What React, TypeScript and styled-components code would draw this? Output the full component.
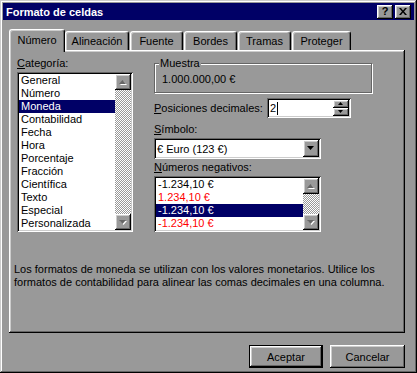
import styled, { createGlobalStyle } from "styled-components";

const FACE = "#999999";
const LIGHT = "#cccccc";
const SHADOW = "#666666";
const NAVY = "#000066";

const raised = `box-shadow: inset -1px -1px #000, inset 1px 1px #fff, inset -2px -2px ${SHADOW}, inset 2px 2px ${LIGHT};`;
const sunken = `box-shadow: inset 1px 1px ${SHADOW}, inset -1px -1px #fff, inset 2px 2px #000, inset -2px -2px ${LIGHT};`;

const GlobalStyle = createGlobalStyle`
  html, body { margin: 0; padding: 0; background: ${FACE}; }
  body { font-family: "Liberation Sans", Arial, sans-serif; font-size: 11px; color: #000; }
  * { box-sizing: border-box; }
`;

const categories = [
  "General", "Número", "Moneda", "Contabilidad", "Fecha", "Hora",
  "Porcentaje", "Fracción", "Científica", "Texto", "Especial", "Personalizada",
];

const negatives = [
  { text: "-1.234,10 €", red: false },
  { text: "1.234,10 €", red: true },
  { text: "-1.234,10 €", red: false },
  { text: "-1.234,10 €", red: true },
];

const tabs = [
  { label: "Número", width: 56 },
  { label: "Alineación", width: 64 },
  { label: "Fuente", width: 53 },
  { label: "Bordes", width: 53 },
  { label: "Tramas", width: 53 },
  { label: "Proteger", width: 59 },
];

interface ArrowProps {
  up?: boolean;
  disabled?: boolean;
  small?: boolean;
}

const Arrow: React.FC<ArrowProps> = ({ up, disabled, small }) => {
  const w = small ? 5 : 7;
  const h = small ? 3 : 4;
  const pts = up ? `0,${h} ${w},${h} ${w / 2},0` : `0,0 ${w},0 ${w / 2},${h}`;
  return (
    <svg width={w + 1} height={h + 1} viewBox={`0 0 ${w + 1} ${h + 1}`}>
      {disabled && <polygon points={pts} fill="#fff" transform="translate(1 1)" />}
      <polygon points={pts} fill={disabled ? SHADOW : "#000"} />
    </svg>
  );
};

const ScrollBarBox: React.FC = () => (
  <ScrollBar>
    <ScrollButton><Arrow up disabled /></ScrollButton>
    <ScrollButton><Arrow disabled /></ScrollButton>
  </ScrollBar>
);

const App = () => {
  return (
    <>
      <GlobalStyle />
      <Window>
        <TitleBar>
          <TitleText>Formato de celdas</TitleText>
          <TitleButtons>
            <TitleButton>?</TitleButton>
            <TitleButton>
              <svg width="8" height="7" viewBox="0 0 8 7">
                <path d="M0 0h2l2 2.5L6 0h2L5 3.5 8 7H6L4 4.5 2 7H0l3-3.5z" fill="#000" />
              </svg>
            </TitleButton>
          </TitleButtons>
        </TitleBar>
        <Body>
          <TabRow>
            {tabs.map((t, i) => (
              <Tab key={t.label} $active={i === 0} $width={t.width}>{t.label}</Tab>
            ))}
          </TabRow>
          <Panel>
            <Columns>
              <LeftColumn>
                <Label><u>C</u>ategoría:</Label>
                <ListBox $height={160}>
                  <ListItems>
                    {categories.map(c => (
                      <ListItem key={c} $selected={c === "Moneda"}>{c}</ListItem>
                    ))}
                  </ListItems>
                  <ScrollBarBox />
                </ListBox>
              </LeftColumn>
              <RightColumn>
                <Group>
                  <GroupLabel>Muestra</GroupLabel>
                  <GroupValue>1.000.000,00 €</GroupValue>
                </Group>
                <FieldRow>
                  <RowLabel><u>P</u>osiciones decimales:</RowLabel>
                  <SpinBox>
                    <SpinText>2<Caret /></SpinText>
                    <SpinButtons>
                      <SpinButton><Arrow up small /></SpinButton>
                      <SpinButton><Arrow small /></SpinButton>
                    </SpinButtons>
                  </SpinBox>
                </FieldRow>
                <Label $top={5}><u>S</u>ímbolo:</Label>
                <Combo>
                  <ComboText>€ Euro (123 €)</ComboText>
                  <ComboButton><Arrow /></ComboButton>
                </Combo>
                <Label $top={2}><u>N</u>úmeros negativos:</Label>
                <ListBox $height={56}>
                  <ListItems>
                    {negatives.map((n, i) => (
                      <ListItem key={i} $selected={i === 2} $red={n.red}>{n.text}</ListItem>
                    ))}
                  </ListItems>
                  <ScrollBarBox />
                </ListBox>
              </RightColumn>
            </Columns>
            <Description>
              Los formatos de moneda se utilizan con los valores monetarios. Utilice los
              <br />
              formatos de contabilidad para alinear las comas decimales en una columna.
            </Description>
          </Panel>
          <ButtonRow>
            <DialogButton $default $width={74}>Aceptar</DialogButton>
            <DialogButton $width={75}>Cancelar</DialogButton>
          </ButtonRow>
        </Body>
      </Window>
    </>
  );
};

const Window = styled.div`
  width: 417px;
  height: 373px;
  padding: 3px;
  background: ${FACE};
  display: flex;
  flex-direction: column;
  box-shadow: inset -1px -1px #000, inset 1px 1px ${LIGHT}, inset -2px -2px ${SHADOW}, inset 2px 2px #fff;
`;

const TitleBar = styled.div`
  height: 17px;
  background: ${NAVY};
  display: flex;
  align-items: center;
  justify-content: space-between;
  padding: 0 3px 0 3px;
`;

const TitleText = styled.span`
  color: #fff;
  font-weight: bold;
  font-size: 11px;
`;

const TitleButtons = styled.div`
  display: flex;
  gap: 2px;
`;

const TitleButton = styled.div`
  width: 16px;
  height: 14px;
  background: ${FACE};
  ${raised}
  display: flex;
  align-items: center;
  justify-content: center;
  font-weight: bold;
  font-size: 11px;
  line-height: 14px;
  padding-bottom: 1px;
`;

const Body = styled.div`
  flex: 1;
  display: flex;
  flex-direction: column;
  padding: 9px 9px 0 6px;
`;

const TabRow = styled.div`
  display: flex;
  align-items: flex-start;
  height: 23px;
  margin-bottom: -2px;
`;

const Tab = styled.div<{ $active?: boolean; $width: number }>`
  position: relative;
  z-index: ${p => (p.$active ? 1 : 0)};
  width: ${p => p.$width}px;
  height: ${p => (p.$active ? 23 : 19)}px;
  margin-top: ${p => (p.$active ? 0 : 2)}px;
  margin-right: ${p => (p.$active ? 0 : 1)}px;
  background: ${FACE};
  border: 1px solid;
  border-color: #fff #000 transparent #fff;
  border-bottom: none;
  border-radius: 3px 3px 0 0;
  box-shadow: inset -1px 0 ${SHADOW}, inset 1px 1px ${LIGHT};
  text-align: center;
  padding-top: ${p => (p.$active ? 4 : 3)}px;
  line-height: 13px;
`;

const Panel = styled.div`
  height: 283px;
  background: ${FACE};
  ${raised}
  padding: 7px 7px 0 5px;
  display: flex;
  flex-direction: column;
`;

const Columns = styled.div`
  display: flex;
  gap: 21px;
`;

const LeftColumn = styled.div`
  width: 119px;
  padding-left: 3px;
  display: flex;
  flex-direction: column;
`;

const RightColumn = styled.div`
  width: 218px;
  display: flex;
  flex-direction: column;
`;

const Label = styled.div<{ $top?: number }>`
  height: 13px;
  line-height: 13px;
  margin-top: ${p => p.$top || 0}px;
  margin-bottom: 2px;
  white-space: nowrap;
`;

const ListBox = styled.div<{ $height: number }>`
  height: ${p => p.$height}px;
  width: 100%;
  max-width: 167px;
  padding: 2px;
  background: #fff;
  display: flex;
  ${sunken}
`;

const ListItems = styled.div`
  flex: 1;
  display: flex;
  flex-direction: column;
  overflow: hidden;
`;

const ListItem = styled.div<{ $selected?: boolean; $red?: boolean }>`
  height: 13px;
  line-height: 13px;
  padding-left: 2px;
  white-space: nowrap;
  background: ${p => (p.$selected ? NAVY : "transparent")};
  color: ${p => (p.$selected ? "#fff" : p.$red ? "#ff0000" : "#000")};
`;

const ScrollBar = styled.div`
  width: 16px;
  display: flex;
  flex-direction: column;
  justify-content: space-between;
  background: repeating-conic-gradient(#fff 0 25%, ${FACE} 0 50%) 0 0 / 2px 2px;
`;

const ScrollButton = styled.div`
  width: 16px;
  height: 16px;
  background: ${FACE};
  ${raised}
  display: flex;
  align-items: center;
  justify-content: center;
`;

const Group = styled.div`
  position: relative;
  margin-top: 6px;
  height: 30px;
  border: 1px solid ${SHADOW};
  box-shadow: inset 1px 1px #fff, 1px 1px #fff;
  display: flex;
  align-items: center;
  padding: 2px 0 0 7px;
`;

const GroupLabel = styled.span`
  position: absolute;
  top: -7px;
  left: 4px;
  padding: 0 1px;
  line-height: 13px;
  background: ${FACE};
`;

const GroupValue = styled.span`
  line-height: 13px;
`;

const FieldRow = styled.div`
  display: flex;
  align-items: center;
  margin-top: 5px;
`;

const RowLabel = styled.div`
  width: 113px;
  white-space: nowrap;
`;

const SpinBox = styled.div`
  width: 84px;
  height: 20px;
  padding: 2px;
  background: #fff;
  display: flex;
  ${sunken}
`;

const SpinText = styled.div`
  flex: 1;
  display: flex;
  align-items: center;
  padding-left: 1px;
  line-height: 13px;
`;

const Caret = styled.span`
  display: inline-block;
  width: 1px;
  height: 13px;
  background: #000;
  margin-left: 1px;
`;

const SpinButtons = styled.div`
  width: 16px;
  display: flex;
  flex-direction: column;
`;

const SpinButton = styled.div`
  flex: 1;
  background: ${FACE};
  ${raised}
  display: flex;
  align-items: center;
  justify-content: center;
`;

const Combo = styled.div`
  width: 167px;
  height: 21px;
  padding: 2px;
  background: #fff;
  display: flex;
  ${sunken}
`;

const ComboText = styled.div`
  flex: 1;
  display: flex;
  align-items: center;
  padding-left: 1px;
`;

const ComboButton = styled.div`
  width: 16px;
  background: ${FACE};
  ${raised}
  display: flex;
  align-items: center;
  justify-content: center;
`;

const Description = styled.p`
  margin: 31px 0 0 0;
  white-space: nowrap;
  line-height: 13px;
`;

const ButtonRow = styled.div`
  display: flex;
  justify-content: flex-end;
  gap: 7px;
  margin-top: 12px;
`;

const DialogButton = styled.button<{ $default?: boolean; $width: number }>`
  width: ${p => p.$width}px;
  height: 23px;
  padding: 0;
  border: none;
  font-family: "Liberation Sans", Arial, sans-serif;
  font-size: 11px;
  color: #000;
  background: ${FACE};
  ${p =>
    p.$default
      ? `box-shadow: inset 0 0 0 1px #000, inset -2px -2px #000, inset 2px 2px #fff, inset -3px -3px ${SHADOW}, inset 3px 3px ${LIGHT};`
      : raised}
`;

export default App;
